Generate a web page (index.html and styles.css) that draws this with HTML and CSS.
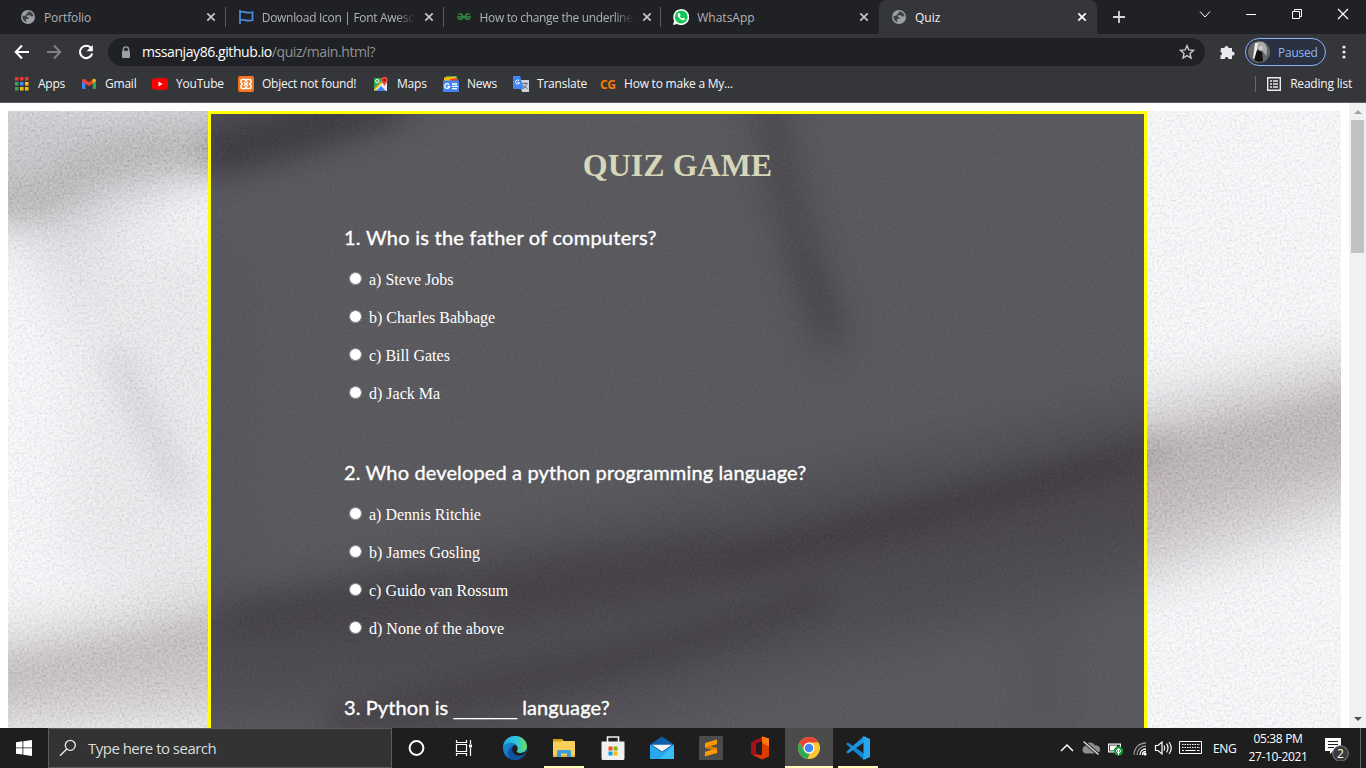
FILE: index.html
```html
<!DOCTYPE html>
<html lang="en">
<head>
<meta charset="utf-8">
<title>Quiz</title>
<link rel="stylesheet" href="styles.css">
</head>
<body>
<svg class="defs" width="0" height="0">
  <symbol id="globe" viewBox="0 0 16 16"><circle cx="8" cy="8" r="7" fill="#9aa0a6"/><path d="M8.500 2.200c-1 1-.2 1.700-1.600 2.300-1.300.6-.5 2-2 2.200-1 .2-1.600-.4-2.500.3-.3 2.800 1.300 5.300 4.200 6.200.2-1.400-1.200-1.700-.6-2.700.5-.8 3-.2 3-1.700 0-1 1.500-.3 2-1 .6-1 1.700-.5 2.600-.4-.2-2.500-2-4.800-5.100-5.200z" fill="#35363a" opacity=".9"/><path d="M6.600 6.500l3-.3 1.600 1-1 1-1.600.5-1.500-.8z" fill="#9aa0a6"/></symbol>
  <symbol id="close" viewBox="0 0 10 10"><path d="M1.300 1.300l7.400 7.400M8.700 1.300L1.300 8.700" stroke="currentColor" stroke-width="1.700"/></symbol>
</svg>

<header class="browser">
  <div class="tabstrip">
    <div class="tab"><svg class="fav"><use href="#globe"/></svg><span class="tab-title t1">Portfolio</span><svg class="x"><use href="#close"/></svg></div>
    <div class="tab"><svg class="fav" viewBox="0 0 16 16"><path d="M2 1v14M2 3.200c4-1.800 6 1.800 12.500 0v8c-6.500 1.800-8.500-1.800-12.500 0" fill="none" stroke="#4c8ee0" stroke-width="1.700"/></svg><span class="tab-title t2">Download Icon | Font Aweso</span><svg class="x"><use href="#close"/></svg></div>
    <div class="tab"><svg class="fav" viewBox="0 0 16 16"><path d="M2 5.500c2-1.500 5 0 5 2.500s-3.500 3-5 1.500M14 5.500c-2-1.500-5 0-5 2.500s3.500 3 5 1.500M1 8h14" fill="none" stroke="#2f8d46" stroke-width="1.400"/></svg><span class="tab-title t3">How to change the underline</span><svg class="x"><use href="#close"/></svg></div>
    <div class="tab"><svg class="fav" viewBox="0 0 16 16"><path d="M0 16l1.200-4.200A8 8 0 1 1 4.300 15z" fill="#fff"/><circle cx="8.200" cy="7.900" r="6.500" fill="#13c656"/><path d="M5.300 4.200c-1.200 1-.8 3 1.200 5s4.200 2.800 5.400 1.400c.4-.5.3-1-.1-1.200l-1.500-.7-.9.900c-1.200-.5-2-1.300-2.500-2.400l.7-.9-.7-1.700c-.3-.7-1-.8-1.600-.4z" fill="#fff"/></svg><span class="tab-title t4">WhatsApp</span><svg class="x"><use href="#close"/></svg></div>
    <div class="tab active"><svg class="fav"><use href="#globe"/></svg><span class="tab-title t5">Quiz</span><svg class="x"><use href="#close"/></svg></div>
    <svg class="plus" viewBox="0 0 12 12"><path d="M6 0v12M0 6h12" stroke="#d5d6d8" stroke-width="1.800"/></svg>
    <div class="win">
      <svg viewBox="0 0 12 12"><path d="M1 3.500l5 5.500L11 3.500" fill="none" stroke="#fff"/></svg>
      <svg viewBox="0 0 12 12"><path d="M1 6.500h10" stroke="#fff"/></svg>
      <svg viewBox="0 0 12 12"><path d="M1.500 3.500h7v7h-7zM3.500 3.500v-2h7v7h-2" fill="none" stroke="#fff"/></svg>
      <svg viewBox="0 0 12 12"><path d="M1 1l10 10M11 1L1 11" stroke="#fff" stroke-width="1.200"/></svg>
    </div>
  </div>

  <div class="toolbar">
    <svg class="nav" viewBox="0 0 16 16"><path d="M15 8H2M8 1.500L1.700 8 8 14.500" fill="none" stroke="#fff" stroke-width="2"/></svg>
    <svg class="nav" viewBox="0 0 16 16"><path d="M1 8h13M8 1.500L14.300 8 8 14.500" fill="none" stroke="#7f8083" stroke-width="2"/></svg>
    <svg class="nav" viewBox="0 0 16 16"><path d="M13.200 4.200A6.200 6.200 0 1 0 14.200 9.500" fill="none" stroke="#fff" stroke-width="2.100"/><path d="M14.800 1v6.200H8.600z" fill="#fff"/></svg>
    <div class="omnibox">
      <svg class="lock" viewBox="0 0 10 13"><path d="M2.400 5V3.500a2.600 2.600 0 0 1 5.200 0V5" fill="none" stroke="#9aa0a6" stroke-width="1.400"/><rect x="1" y="4.800" width="8" height="7.200" rx=".8" fill="#9aa0a6"/></svg>
      <span class="url">mssanjay86.github.io<span>/quiz/main.html?</span></span>
      <svg class="star" viewBox="0 0 16 16"><path d="M8 1.600l1.800 4.300 4.700.4-3.500 3.100 1 4.600L8 11.600 4 14l1-4.600L1.500 6.300l4.700-.4z" fill="none" stroke="#c8cacd" stroke-width="1.400"/></svg>
    </div>
    <svg class="puzzle" viewBox="0 0 16 16"><path d="M2 4h3.500a2 2 0 1 1 4 0H13v3.700a2 2 0 1 1 0 3.800V15H9.500a1.900 1.900 0 0 0-3.800 0H1.500v-3.600a1.900 1.900 0 0 0 0-3.700z" fill="#e8eaed"/></svg>
    <div class="profile"><svg viewBox="0 0 22 22"><circle cx="11" cy="11" r="11" fill="#666"/><path d="M9 1h6c4 3 5 8 3 14l-4-6-4-1z" fill="#aaa"/><path d="M7 2h3l-1 9-2 8-2-2z" fill="#eee"/><path d="M9 9l5 2 1 9-4 1-5-2z" fill="#111"/><path d="M11 6q3-3 4 1l-1 3-3-1" fill="#ccc"/></svg><span>Paused</span></div>
    <svg class="dots" viewBox="0 0 4 14"><circle cx="2" cy="2" r="1.600"/><circle cx="2" cy="7" r="1.600"/><circle cx="2" cy="12" r="1.600"/></svg>
  </div>

  <nav class="bookmarks">
    <div class="bm b1"><svg viewBox="0 0 16 16"><path d="M1 1h3.500v3.500H1zM6 1h3.500v3.500H6zM11 1h3.500v3.500H11z" fill="#e33b2e"/><path d="M1 6h3.500v3.500H1zM1 11h3.500v3.500H1z" fill="#34a853"/><path d="M6 6h3.500v3.500H6z" fill="#4285f4"/><path d="M11 6h3.500v3.500H11zM6 11h3.500v3.500H6zM11 11h3.500v3.500H11z" fill="#fbbc04"/></svg><span>Apps</span></div>
    <div class="bm b2"><svg viewBox="0 0 16 16"><path d="M1 4h3.300v9H2q-1 0-1-1z" fill="#4285f4"/><path d="M11.700 4H15v8q0 1-1 1h-2.300z" fill="#34a853"/><path d="M1 4.500Q1.500 2 4 3.200l4 3.100 4-3.100v4L8 10.300 1 5.500z" fill="#ea4335"/><path d="M11.700 3.300Q14.600 2 15 4.500L11.700 7.500z" fill="#fbbc04"/></svg><span>Gmail</span></div>
    <div class="bm b3"><svg viewBox="0 0 16 16"><rect y="2.300" width="16" height="11.500" rx="3" fill="#f00"/><path d="M6.500 5.600v4.900l4-2.450z" fill="#fff"/></svg><span>YouTube</span></div>
    <div class="bm b4"><svg viewBox="0 0 16 16"><rect width="16" height="16" rx="2" fill="#f37623"/><path d="M4 3.500h3l1 1.500 1-1.500h3q1 0 1 1v2L11.500 8 13 9.500v2q0 1-1 1H9L8 11l-1 1.500H4q-1 0-1-1v-2L4.500 8 3 6.500v-2q0-1 1-1zM6 6l4 4M10 6l-4 4" fill="none" stroke="#fff" stroke-width="1.500"/></svg><span>Object not found!</span></div>
    <div class="bm b5"><svg viewBox="0 0 16 16"><path d="M1 2h13v13H1z" fill="#34a853"/><path d="M1 14L13 2l1 2v11z" fill="#e8eaed"/><path d="M3 15l5-5 5 5z" fill="#4285f4"/><path d="M1 13L12 2h2.500L1 15z" fill="#fbbc04"/><circle cx="4.300" cy="5" r="1.700" fill="none" stroke="#fff"/><path d="M8.300 4a3.200 3.200 0 1 1 6.400 0c0 2-2.300 3.500-3.200 6-1-2.500-3.200-4-3.200-6z" fill="#ea4335"/><circle cx="11.500" cy="4" r="1.200" fill="#811"/></svg><span>Maps</span></div>
    <div class="bm b6"><svg viewBox="0 0 16 16"><path d="M3 0h11v5H3z" fill="#34a853"/><path d="M1 1.500l12-1v6H1z" fill="#fbbc04"/><path d="M7 3l8-1v4H7z" fill="#ea4335"/><rect y="4.500" width="16" height="11.500" rx="1" fill="#4285f4"/><path d="M6 8.500a2.400 2.400 0 1 0 .5 2H4.500M9 8h5M9 10.300h6M9 12.600h5" fill="none" stroke="#fff" stroke-width="1.300"/></svg><span>News</span></div>
    <div class="bm b7"><svg viewBox="0 0 16 16"><path d="M6 4h10v12H9z" fill="#cfd2d6"/><path d="M1 0h6l4 13H1q-1 0-1-1V1q0-1 1-1z" fill="#4285f4"/><path d="M6 4.600a2 2 0 1 0 .5 2H4.700" fill="none" stroke="#fff"/><path d="M9 7.500h6M12 6v1.500M14 7.500q-1 3.500-4 5M10.500 9q1 2.500 4 3.500" fill="none" stroke="#6b747d"/></svg><span>Translate</span></div>
    <div class="bm b8"><b>CG</b><span>How to make a My...</span></div>
    <div class="reading"><svg viewBox="0 0 16 16"><path d="M1.700 1.700h12.600v12.600H1.700z" fill="none" stroke="#e8eaed" stroke-width="1.400"/><path d="M4 5h2M4 8h2M4 11h2M7 5h5M7 8h5M7 11h5" stroke="#e8eaed" stroke-width="1.500"/></svg><span>Reading list</span></div>
  </nav>
</header>

<main class="viewport">
  <div class="page">
    <svg class="backdrop" viewBox="8 111 1333 617" preserveAspectRatio="none">
      <defs>
        <filter id="soft" x="-20%" y="-20%" width="140%" height="140%"><feGaussianBlur stdDeviation="15"/></filter>
        <filter id="wide" x="-30%" y="-30%" width="160%" height="160%"><feGaussianBlur stdDeviation="28"/></filter>
        <filter id="grain" x="0" y="0" width="100%" height="100%" color-interpolation-filters="sRGB"><feTurbulence type="fractalNoise" baseFrequency=".4" numOctaves="2" seed="4"/><feColorMatrix values=".8 .6 0 0 -.2  .6 .8 0 0 -.2  .6 .6 .2 0 -.2  0 0 0 0 1"/></filter>
        <filter id="grain-light" x="0" y="0" width="100%" height="100%" color-interpolation-filters="sRGB"><feTurbulence type="fractalNoise" baseFrequency=".4" numOctaves="2" seed="9"/><feColorMatrix values="1 .8 0 0 -.02  1 .8 0 0 -.02  1 .8 0 0 -.01  0 0 0 0 1"/></filter>
      </defs>
      <rect x="8" y="111" width="1333" height="617" fill="#f7f8fa"/>
      <g filter="url(#wide)" fill="none">
        <path d="M-40 90H480L200 170 80 230-40 220z" fill="#c5c4c9"/>
        <path d="M60 220Q110 340 190 520" stroke="#dcdde0" stroke-width="70"/>
        <path d="M90 240H250V640L60 560z" fill="#e9eaec"/>
        <path d="M-40 650L300 585 720 500 1400 350V490L1100 590 900 640 500 700-40 730z" fill="#c6c1c4"/>
        <path d="M760 90L835 370" stroke="#deddE2" stroke-width="50"/>
        <path d="M350 770L850 620" stroke="#c9c7cc" stroke-width="60"/>
        <path d="M1045 590V760" stroke="#dedce2" stroke-width="40"/>
      </g>
      <g filter="url(#soft)" fill="none">
        <path d="M-20 185Q30 215 65 180 105 145 215 150" stroke="#b4b3b2" stroke-width="40"/>
        <path d="M208 152Q270 142 400 95" stroke="#8b868e" stroke-width="44"/>
        <path d="M115 350L180 495" stroke="#cfccd5" stroke-width="20"/>
        <path d="M768 90Q785 220 834 345" stroke="#b5b1ba" stroke-width="24"/>
        <path d="M808 250L828 325" stroke="#8e8995" stroke-width="10"/>
        <path d="M-20 682Q120 657 215 625T640 550 1000 490 1150 445 1380 395V455Q1250 480 1140 525L900 565 640 598 360 638 215 645-20 685z" fill="#bbb4b5"/>
        <path d="M-20 680Q100 660 205 635" stroke="#b4aeac" stroke-width="14"/>
        <path d="M700 570L900 520 1170 450" stroke="#857a7a" stroke-width="24"/>
        <path d="M480 600L720 560" stroke="#a79e9f" stroke-width="50"/>
        <path d="M225 622L450 585" stroke="#a29b9c" stroke-width="28"/>
        <path d="M330 725L620 660 740 625 830 595" stroke="#9c9395" stroke-width="24"/>
        <path d="M1130 465L1380 395" stroke="#a9a29f" stroke-width="12"/>
      </g>
      <rect class="noise" x="8" y="111" width="1333" height="617" filter="url(#grain)"/>
      <rect class="noise-light" x="8" y="111" width="1333" height="617" filter="url(#grain-light)"/>
    </svg>
    <form class="quiz">
      <h1>QUIZ GAME</h1>
      <h2 class="q1">1. Who is the father of computers?</h2>
      <div class="opt"><input type="radio" name="q1"> a) Steve Jobs</div>
      <div class="opt"><input type="radio" name="q1"> b) Charles Babbage</div>
      <div class="opt"><input type="radio" name="q1"> c) Bill Gates</div>
      <div class="opt"><input type="radio" name="q1"> d) Jack Ma</div>
      <h2 class="q2">2. Who developed a python programming language?</h2>
      <div class="opt"><input type="radio" name="q2"> a) Dennis Ritchie</div>
      <div class="opt"><input type="radio" name="q2"> b) James Gosling</div>
      <div class="opt"><input type="radio" name="q2"> c) Guido van Rossum</div>
      <div class="opt"><input type="radio" name="q2"> d) None of the above</div>
      <h2 class="q3">3. Python is <span class="blank">______</span> language?</h2>
    </form>
  </div>
  <div class="scrollbar"><svg viewBox="0 0 17 17"><path d="M5 11h8L9 7z" fill="#a3a3a3"/></svg><div class="thumb"></div><svg class="down" viewBox="0 0 17 17"><path d="M5 6h8L9 10z" fill="#505050"/></svg></div>
</main>

<footer class="taskbar">
  <div class="start"><svg viewBox="0 0 16 16"><path d="M0 2.200L6.500 1.300V7.500H0zM7.300 1.200L16 0v7.500H7.300zM0 8.300h6.500v6.300L0 13.700zM7.300 8.300H16V16l-8.700-1.300z" fill="#fff"/></svg></div>
  <div class="search"><svg viewBox="0 0 18 18"><circle cx="11.300" cy="6.300" r="5" fill="none" stroke="#eee" stroke-width="1.300"/><path d="M7.700 10L1 16.700" stroke="#eee" stroke-width="1.300"/></svg><span>Type here to search</span></div>
  <div class="apps">
    <div class="app"><svg viewBox="0 0 24 24"><circle cx="11.500" cy="12" r="6.900" fill="none" stroke="#fff" stroke-width="2"/></svg></div>
    <div class="app"><svg viewBox="0 0 24 24"><path d="M2.500 4v2.500h10V4M2.500 8.500h10v7h-10zM2.500 20v-2.500h10V20M16.500 4v4M16.500 12v8" fill="none" stroke="#fff" stroke-width="1.200"/><path d="M15 8.500h3v3h-3z" fill="#fff"/></svg></div>
    <div class="app"><svg viewBox="0 0 24 24"><defs><linearGradient id="eg"><stop stop-color="#20a9e5"/><stop offset=".55" stop-color="#2fc5dc"/><stop offset="1" stop-color="#67e05d"/></linearGradient><linearGradient id="eb" x2="1" y2="1"><stop stop-color="#1b9de2"/><stop offset="1" stop-color="#0c4a9b"/></linearGradient></defs><circle cx="12" cy="12" r="12" fill="url(#eb)"/><path d="M0 10C1 3.800 6 0 12 0c7 0 12 5 12 10.500 0 4.500-4 6.500-7 6.500s-4-1-3-2.200c1.500-1.800 1-5.500-2.500-7.200C7 5.800 2 7 0 10z" fill="url(#eg)"/><path d="M14 14.800c-1 1.200.5 2.200 3 2.200 2 0 4-.6 5.500-2 0 2-3 5-5.500 5-5 .5-8-3-8-6.500C9 10 11 8.500 12.500 9c2 1.500 2.500 4 1.500 5.800z" fill="#1e1e1e"/><path d="M9 13.500c0 4.500 4 7.500 11.500 5.500C17 24 11 25 7 22.500 4 19 4 13 10.500 9.600 9.500 10.500 9 12 9 13.500z" fill="#0d539f"/></svg></div>
    <div class="app running"><svg viewBox="0 0 24 24"><path d="M1 3h9l1.500 2H22q1 0 1 1v15H1z" fill="#f9ce5b"/><path d="M1 3h9v2.500H1z" fill="#d99a0e"/><path d="M1 19h22v2H1z" fill="#e8b33e"/><path d="M5 21v-6q0-1 1-1h12q1 0 1 1v6h-4v-3.500H9V21z" fill="#3d9cdc"/></svg></div>
    <div class="app"><svg viewBox="0 0 24 24"><path d="M6.500 6V1h11v5" fill="none" stroke="#f0f0f0" stroke-width="1.600"/><path d="M.5 5.500h23V22q0 2-1 2h-21q-1 0-1-2z" fill="#f0f0f0"/><path d="M7.500 10.500h4v4h-4z" fill="#f25022"/><path d="M12.500 10.500h4v4h-4z" fill="#7fba00"/><path d="M7.500 15.500h4v4h-4z" fill="#00a4ef"/><path d="M12.500 15.500h4v4h-4z" fill="#ffb900"/></svg></div>
    <div class="app"><svg viewBox="0 0 24 24"><path d="M0 8.500L12 .5l12 8V22H0z" fill="#0f5eaa"/><path d="M0 8.500l12 8 12-8V23H0z" fill="#2ba7ee"/><path d="M24 8.500L10 23h14z" fill="#39bdf7"/><path d="M2 8.800h20l-10 6.700z" fill="#f4f6f8"/></svg></div>
    <div class="app"><svg viewBox="0 0 24 24"><rect width="24" height="24" rx="1.500" fill="#4b4b4b"/><path d="M6 7l12-3.500v4.700L11 10l7 2v5l-12 3.500v-4.700l7-2-7-2z" fill="#ff9800"/><path d="M6 11.800l7 2 5-1.500-7-2.300z" fill="#d67b00"/></svg></div>
    <div class="app"><svg viewBox="0 0 24 24"><path d="M3 6.500L14 1v4L8 7.500v10L14 19v4L3 18z" fill="#a80f18"/><path d="M14 .5l7 2v18l-7 3-10-5 10 1z" fill="#dc3b00"/><path d="M14 .5l7 2v8l-7-4z" fill="#ff7a0f"/></svg></div>
    <div class="app running current"><svg viewBox="0 0 24 24"><circle cx="12" cy="12" r="11" fill="#fcc934"/><path d="M2.500 6.500A11 11 0 0 1 21.500 6.500H12a5.500 5.500 0 0 0-4.800 8.200z" fill="#e84335"/><path d="M2.500 6.500L7.200 14.700A5.500 5.500 0 0 0 12 17.500h.7L10.500 22.900A11 11 0 0 1 2.500 6.500z" fill="#33a852"/><circle cx="12" cy="12" r="5.500" fill="#fff"/><circle cx="12" cy="12" r="4.300" fill="#4285f4"/></svg></div>
    <div class="app running code"><svg viewBox="0 0 24 24"><path d="M0 8l2-1.500L18 17.500V24z" fill="#1084d0"/><path d="M0 16L2 17.500 18 6.500V0z" fill="#1a95e0"/><path d="M17.500 0L24 3v18l-6.500 3z" fill="#29a8f2"/></svg></div>
  </div>
  <div class="tray">
    <svg class="chev" viewBox="0 0 24 24"><path d="M6 15l6-6 6 6" fill="none" stroke="#fff" stroke-width="1.500"/></svg>
    <svg viewBox="0 0 24 24"><path d="M6 17.500a4 4 0 0 1 0-7.500 5.500 5.500 0 0 1 10-.5 4 4 0 0 1 2 8z" fill="#8e8e8e"/><path d="M4.500 5.500l15 13" stroke="#1e1e1e" stroke-width="3"/><path d="M4.500 5.500l15 13" stroke="#eee" stroke-width="1.200"/></svg>
    <svg viewBox="0 0 24 24"><path d="M5 7.500h13v9H5z" fill="#fff"/><path d="M6.200 8.700h10.600v6.600H6.200z" fill="#1e1e1e"/><path d="M7 9.500h7v5H7z" fill="#fff"/><circle cx="15.500" cy="15" r="4.700" fill="#119b35"/><path d="M15.500 12.500q4 3 0 4.500-4-1.500 0-4.500v6.500" fill="none" stroke="#fff"/></svg>
    <svg class="wifi" viewBox="0 0 24 24"><g fill="none" stroke="#999" stroke-width="1.300"><path d="M6 19C6 12 11 7 18 7M9 19c0-5 4-9 9-9"/><path d="M12 19c0-3.500 2.500-6 6-6M14.500 19c0-2 1.500-3.500 3.500-3.500" stroke="#fff"/></g><circle cx="17" cy="18" r="1.600" fill="#fff"/></svg>
    <svg class="vol" viewBox="0 0 24 24"><path d="M4.500 9.500h2.500l4-3.500v12l-4-3.500H4.500zM13 9.500q1.500 2.500 0 5M15.500 7.700q3 4.300 0 8.600M18 6q4.500 6 0 12" fill="none" stroke="#fff" stroke-width="1.200"/></svg>
    <svg class="kbd" viewBox="0 0 24 14"><path d="M.5.500h22v12H.5z" fill="none" stroke="#fff"/><path d="M3 3.500h18M3 6.500h18" stroke="#fff" stroke-dasharray="1.500 1"/><path d="M3 9.500h2M6.500 9.500h10M18 9.500h2.500" stroke="#fff"/></svg>
    <span class="lang">ENG</span>
    <div class="clock"><span class="time">05:38 PM</span><span>27-10-2021</span></div>
    <div class="notify"><svg viewBox="0 0 26 26"><path d="M1 3h16v13H9l-3 3v-3H1z" fill="#fff"/><path d="M4 6.500h10M4 9.500h10M4 12.500h6" stroke="#1e1e1e"/><circle cx="16.500" cy="18.500" r="7.800" fill="#3b3b3b" stroke="#858585"/></svg><span>2</span></div>
  </div>
</footer>
</body>
</html>
```
FILE: styles.css
```css
* { box-sizing: border-box; }
body { margin: 0; width: 1366px; height: 768px; overflow: hidden; display: flex; flex-direction: column; background: #fff; font: 12px "Open Sans", "Noto Sans", sans-serif; }
svg { flex: none; display: block; }
.defs { position: absolute; }
.browser { height: 103px; background: #35363a; border-bottom: 1px solid #5d5e62; color: #e8eaed; white-space: nowrap; }

.tabstrip { height: 34px; background: #202124; display: flex; padding-left: 8px; }
.tab { width: 217.75px; display: flex; align-items: center; padding-left: 12px; gap: 8px; color: #b0b3b7; background: linear-gradient(#5a5b5f, #5a5b5f) right 0 top 7px / 1px 20px no-repeat; }
.tab:nth-child(4) { background: none; }
.fav { width: 16px; height: 16px; }
.tab-title { width: 153px; }
.t2, .t3 { -webkit-mask-image: linear-gradient(90deg, #000 88%, transparent); mask-image: linear-gradient(90deg, #000 88%, transparent); }
.x { width: 10px; height: 10px; color: #c3c5c8; margin-left: 1px; }
.tab.active { background: #35363a; color: #f1f3f4; border-radius: 8px 8px 0 0; }
.active .x { color: #fff; }
.plus { width: 12px; height: 12px; margin: 11px 0 0 16px; }
.win { display: flex; gap: 34px; margin: 8px 0 0 74px; }
.win svg { width: 12px; height: 12px; }
.t1 { letter-spacing: -.12px; } .t2 { letter-spacing: -.3px; } .t3 { letter-spacing: -.33px; }

.toolbar { height: 36px; display: flex; align-items: center; padding-left: 14px; }
.nav { width: 16px; height: 16px; margin-right: 16px; }
.omnibox { width: 1097px; height: 28px; border-radius: 14px; background: #202124; display: flex; align-items: center; padding-left: 13px; margin-left: -2px; }
.lock { width: 10px; height: 13px; margin-right: 11px; }
.url { font-size: 14px; color: #fff; letter-spacing: -.42px; margin-top: -1px; }
.url span { color: #8f9398; }
.star { width: 16px; height: 16px; margin-left: auto; margin-right: 10px; }
.puzzle { width: 16px; height: 16px; margin-left: 14px; }
.profile { width: 81px; height: 28px; border: 1px solid #8ab4f8; border-radius: 14px; background: #2b3140; color: #8ab4f8; display: flex; align-items: center; margin-left: 10px; padding-left: 2px; gap: 8px; letter-spacing: -.25px; }
.profile svg { width: 22px; height: 22px; }
.dots { width: 4px; height: 14px; margin-left: 16px; fill: #e8eaed; }

.bookmarks { display: flex; align-items: center; height: 28px; padding-left: 14px; color: #f4f5f6; }
.bm { display: flex; align-items: center; gap: 8px; letter-spacing: -.22px; }
.bm span, .reading span { margin-top: -1px; }
.bm svg, .reading svg { width: 16px; height: 16px; }
.bm b { width: 16px; color: #f57c00; letter-spacing: -.5px; }
.b1 { width: 67px; } .b2 { width: 71px; } .b3 { width: 86px; } .b4 { width: 135px; }
.b5, .b6 { width: 70px; } .b7 { width: 87px; }
.reading { display: flex; align-items: center; gap: 8px; margin-left: auto; padding: 0 14px 0 10px; border-left: 1px solid #68696d; height: 16px; letter-spacing: -.2px; }

.viewport { height: 625px; display: flex; overflow: hidden; }
.page { width: 1349px; height: 625px; padding: 8px 8px 0; position: relative; }
.backdrop { position: absolute; left: 8px; top: 8px; width: 1333px; height: 617px; isolation: isolate; }
.noise { mix-blend-mode: soft-light; opacity: .45; }
.noise-light { opacity: .14; }
.quiz { position: relative; margin-left: 200px; width: 939px; height: 617px; border: 3px solid #ff0; border-bottom: 0; background: rgba(26, 24, 30, .7); color: #fff; padding: 33px 0 0 133px; font: 16px "Liberation Serif", serif; overflow: hidden; }
.quiz h1 { margin: 0 0 40px; padding-right: 133px; text-align: center; font: bold 32px/36px "Liberation Serif", serif; color: #d6d6b8; }
.quiz h2 { margin: 0 0 8px; font: 400 20px/28px Lato, "Open Sans", sans-serif; height: 30px; white-space: nowrap; -webkit-text-stroke: .35px #fff; }
.q1 { letter-spacing: .25px; }
.q2 { letter-spacing: .14px; }
.q3 { letter-spacing: .1px; }
.quiz .q2, .quiz .q3 { margin-top: 45px; }
.blank { font: 19px/20px "Liberation Sans", sans-serif; letter-spacing: 0; -webkit-text-stroke: 0; }
.opt { height: 38px; line-height: 38px; }
.opt input { margin: 3px 3px 0 5px; }
.scrollbar { width: 17px; height: 625px; background: #f1f1f1; display: flex; flex-direction: column; }
.scrollbar svg { width: 17px; height: 17px; }
.thumb { width: 13px; height: 133px; margin-left: 2px; background: #c1c1c1; }
.scrollbar .down { margin-top: auto; }

.taskbar { height: 40px; background: #1e1e1e; color: #fff; display: flex; align-items: center; white-space: nowrap; }
.start { width: 48px; display: flex; justify-content: center; }
.start svg { width: 16px; height: 16px; }
.search { width: 344px; height: 40px; background: #333; border: 1px solid #5c5c5c; display: flex; align-items: center; padding-left: 10px; gap: 11px; font-size: 15px; letter-spacing: -.52px; color: #dcdcdc; }
.search svg { width: 18px; height: 18px; }
.apps { display: flex; height: 40px; }
.app { width: 49px; height: 40px; display: flex; align-items: center; justify-content: center; }
.app svg { width: 24px; height: 24px; }
.running { background: linear-gradient(#ffffb8, #ffffb8) center bottom / 40px 2px no-repeat; }
.current { width: 48px; margin-left: 1px; background: linear-gradient(#ffffb8, #ffffb8) center bottom / 48px 2px no-repeat #4b4b4b; }
.tray { margin-left: auto; display: flex; align-items: center; width: 311px; height: 40px; font-size: 12px; }
.tray svg { width: 24px; height: 24px; }
.tray .wifi { margin-left: 1px; }
.tray .vol { margin-left: -1px; }
.tray .kbd { height: 14px; margin-left: 4px; }
.lang { margin-left: 10px; width: 24px; letter-spacing: -.3px; }
.clock { width: 60px; margin-left: 11px; display: flex; flex-direction: column; align-items: center; line-height: 18px; letter-spacing: -.35px; }
.notify { position: relative; width: 37px; height: 40px; border-right: 1px solid #666; margin-left: 16px; padding: 7px 0 0; }
.notify svg { width: 26px; height: 26px; }
.notify span { position: absolute; left: 13px; top: 17px; font-size: 12px; }
```
